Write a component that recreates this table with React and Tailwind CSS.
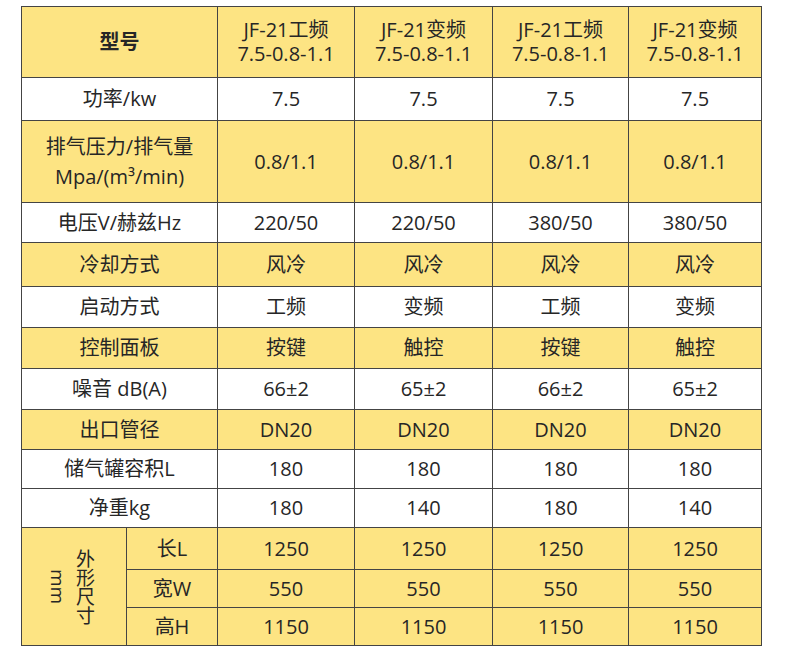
const Y = 'bg-[#fde483]';
const W = 'bg-white';

const rows = [
  { label: '功率/kw', vals: ['7.5', '7.5', '7.5', '7.5'], bg: W, h: 'h-[43px]' },
  { label: ['排气压力/排气量', 'Mpa/(m³/min)'], vals: ['0.8/1.1', '0.8/1.1', '0.8/1.1', '0.8/1.1'], bg: Y, h: 'h-[82px]' },
  { label: '电压V/赫兹Hz', vals: ['220/50', '220/50', '380/50', '380/50'], bg: W, h: 'h-[40px]' },
  { label: '冷却方式', vals: ['风冷', '风冷', '风冷', '风冷'], bg: Y, h: 'h-[44px]' },
  { label: '启动方式', vals: ['工频', '变频', '工频', '变频'], bg: W, h: 'h-[41px]' },
  { label: '控制面板', vals: ['按键', '触控', '按键', '触控'], bg: Y, h: 'h-[41px]' },
  { label: '噪音 dB(A)', vals: ['66±2', '65±2', '66±2', '65±2'], bg: W, h: 'h-[41px]' },
  { label: '出口管径', vals: ['DN20', 'DN20', 'DN20', 'DN20'], bg: Y, h: 'h-[40px]' },
  { label: '储气罐容积L', vals: ['180', '180', '180', '180'], bg: W, h: 'h-[39px]' },
  { label: '净重kg', vals: ['180', '140', '180', '140'], bg: W, h: 'h-[39px]' },
];

const dims = [
  { label: '长L', val: '1250', h: 'h-[42px]' },
  { label: '宽W', val: '550', h: 'h-[38px]' },
  { label: '高H', val: '1150', h: 'h-[38px]' },
];

const models = [
  ['JF-21工频', '7.5-0.8-1.1'],
  ['JF-21变频', '7.5-0.8-1.1'],
  ['JF-21工频', '7.5-0.8-1.1'],
  ['JF-21变频', '7.5-0.8-1.1'],
];

const cell = 'border-[1.5px] border-[#444] text-center align-middle p-0';

export default function App() {
  return (
    <div className="w-[790px] h-[650px] bg-white pt-[6px] pl-[21px] text-[#262626] text-[20px] font-['Open_Sans','Noto_Sans_CJK_SC',sans-serif]">
      <table className="table-fixed border-collapse w-[740px]">
        <colgroup>
          <col className="w-[105px]" />
          <col className="w-[91px]" />
          <col className="w-[137px]" />
          <col className="w-[138px]" />
          <col className="w-[136px]" />
          <col className="w-[133px]" />
        </colgroup>
        <tbody>
          <tr className={`${Y} h-[71px]`}>
            <td colSpan={2} className={`${cell} font-semibold`}>型号</td>
            {models.map((m, i) => (
              <td key={i} className={`${cell} leading-[24px]`}>
                <div>{m[0]}</div>
                <div>{m[1]}</div>
              </td>
            ))}
          </tr>
          {rows.map((r, i) => (
            <tr key={i} className={`${r.bg} ${r.h}`}>
              <td colSpan={2} className={`${cell} leading-[30px]`}>
                {Array.isArray(r.label) ? r.label.map((l, j) => <div key={j}>{l}</div>) : r.label}
              </td>
              {r.vals.map((v, j) => (
                <td key={j} className={cell}>{v}</td>
              ))}
            </tr>
          ))}
          {dims.map((d, i) => (
            <tr key={i} className={`${Y} ${d.h}`}>
              {i === 0 && (
                <td rowSpan={3} className={cell}>
                  <div className="flex justify-center items-center gap-[6px] leading-[20px] pr-[6px]">
                    <span className="[writing-mode:vertical-rl] text-[19px]">mm</span>
                    <span className="[writing-mode:vertical-rl] text-[19px]">外形尺寸</span>
                  </div>
                </td>
              )}
              <td className={cell}>{d.label}</td>
              {[0, 1, 2, 3].map((j) => (
                <td key={j} className={cell}>{d.val}</td>
              ))}
            </tr>
          ))}
        </tbody>
      </table>
    </div>
  );
}
